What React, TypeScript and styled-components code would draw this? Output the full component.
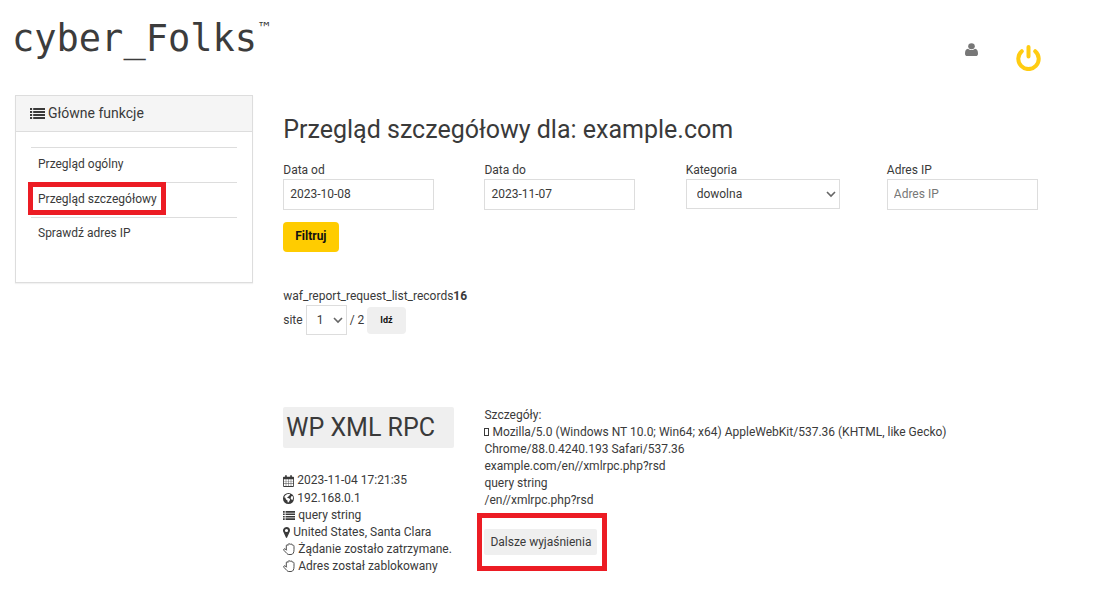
import React from "react";
import styled, { createGlobalStyle, css } from "styled-components";

const GlobalStyle = createGlobalStyle`
  *, *::before, *::after { box-sizing: border-box; }
  body {
    margin: 0;
    background: #fff;
    color: #3a3a3a;
    font: 12px/17px Roboto, "Liberation Sans", sans-serif;
  }
  button, input, select { font-family: inherit; color: inherit; }
`;

const redFrame = css`
  position: relative;
  &::after {
    content: "";
    position: absolute;
    border: 5px solid #ec1c24;
    pointer-events: none;
  }
`;

const Header = styled.header`
  display: flex;
  justify-content: space-between;
  align-items: flex-start;
  height: 95px;
  padding: 16px 67px 0 12px;
`;

const Logo = styled.a`
  display: flex;
  align-items: flex-start;
  color: #3c3c3c;
  text-decoration: none;
  font: 37px/46px "DejaVu Sans Mono", monospace;
`;

const Trademark = styled.span`
  font: 15px/24px "DejaVu Sans", sans-serif;
`;

const Tools = styled.nav`
  display: flex;
  align-items: flex-start;
  gap: 38px;
  padding-top: 27px;
`;

const ToolButton = styled.button<{ $tone: string }>`
  display: flex;
  padding: 0;
  border: 0;
  background: none;
  color: ${(p) => p.$tone};
`;

/* Four equal tracks: the panel takes one, the content the other three. */
const PageGrid = styled.div`
  display: grid;
  grid-template-columns: repeat(4, minmax(0, 1fr));
  column-gap: 30px;
  align-items: start;
  padding: 0 50px 0 15px;
`;

const Panel = styled.aside`
  border: 1px solid #ddd;
  box-shadow: 0 1px 1px rgba(0, 0, 0, 0.05);
`;

const PanelTitle = styled.h2`
  display: flex;
  align-items: center;
  gap: 3px;
  margin: 0;
  padding: 7px 14px 8px;
  border-bottom: 1px solid #ddd;
  background: #f5f5f5;
  font-size: 14px;
  line-height: 20px;
  font-weight: 400;
`;

const Menu = styled.ul`
  margin: 0;
  padding: 15px 15px 32px;
  list-style: none;
`;

const MenuItem = styled.li`
  padding: 7px 7px 9px;
  border-top: 1px solid #ddd;
  line-height: 18px;

  &:last-child { padding: 6px 7px 8px; }
`;

const MenuLink = styled.a<{ $marked?: boolean }>`
  display: inline-block;
  color: inherit;
  text-decoration: none;
  white-space: nowrap;
  ${(p) => p.$marked && redFrame}
  &::after { inset: -8px -9px -7px -10px; }
`;

const Main = styled.main`
  grid-column: span 3;
  padding-top: 21px;
`;

const Title = styled.h1`
  margin: 0 0 17px;
  font-size: 25px;
  line-height: 28px;
  font-weight: 400;
`;

const Filters = styled.form`
  display: grid;
  grid-template-columns: repeat(4, minmax(0, 1fr));
  column-gap: 30px;
  align-items: start;
`;

const Field = styled.div`
  display: flex;
  flex-direction: column;
  line-height: 18px;
`;

const TextBox = styled.input`
  width: 100%;
  max-width: 151px;
  height: 31px;
  padding: 0 6px 2px;
  border: 1px solid #ddd;
  background: #fff;
  font-size: 12px;
  &::placeholder { color: #777; opacity: 1; }
`;

const SelectWrap = styled.span<{ $width: number }>`
  display: grid;
  align-items: center;
  width: 100%;
  max-width: ${(p) => p.$width}px;
  > * { grid-area: 1 / 1; }
  > svg { justify-self: end; margin-right: 4px; pointer-events: none; }
`;

const Select = styled.select`
  appearance: none;
  width: 100%;
  height: 30px;
  padding: 0 10px;
  border: 1px solid #ddd;
  border-radius: 0;
  background: #fff;
  font-size: 12px;
`;

const FilterButton = styled.button`
  justify-self: start;
  height: 30px;
  margin-top: 12px;
  padding: 0 12px 2px;
  border: 0;
  border-radius: 4px;
  background: #fc0;
  color: #111;
  font-size: 12px;
  font-weight: 700;
`;

const Records = styled.p`
  margin: 36px 0 0;
`;

const Pager = styled.form`
  display: flex;
  align-items: center;
  gap: 3px;
`;

const GoButton = styled.button`
  height: 27px;
  padding: 0 13px;
  border: 0;
  border-radius: 4px;
  background: #efefef;
  color: #111;
  font-size: 9px;
  font-weight: 700;
`;

const Entry = styled.article`
  display: grid;
  grid-template-columns: repeat(4, minmax(0, 1fr));
  column-gap: 30px;
  align-items: start;
  margin-top: 72px;
`;

const EntryName = styled.h2`
  margin: 0 0 24px;
  padding: 0 3px;
  border-radius: 2px;
  background: #efefef;
  font-size: 25px;
  line-height: 41px;
  font-weight: 400;
  white-space: nowrap;
`;

const Facts = styled.ul`
  display: grid;
  margin: 0;
  padding: 0;
  list-style: none;
`;

const Fact = styled.li`
  display: flex;
  align-items: center;
  gap: 3px;
  white-space: nowrap;

  &:first-child { padding-bottom: 1px; }
`;

const Details = styled.div`
  grid-column: span 3;
`;

const UserAgent = styled.div`
  max-width: 480px;
`;

const Missing = styled.span`
  display: inline-block;
  width: 5px;
  height: 8px;
  margin-right: 3px;
  border: 1px solid #3a3a3a;
`;

const MoreLink = styled.a`
  ${redFrame}
  display: inline-block;
  margin-top: 20px;
  padding: 5px 6px 4px;
  border-radius: 2px;
  background: #efefef;
  color: inherit;
  text-decoration: none;
  &::after { inset: -16px -10px -16px -7px; }
`;

const ListIcon = ({ width, height }: { width: number; height: number }) => (
  <svg width={width} height={height} viewBox="0 0 14 11" preserveAspectRatio="none" fill="currentColor" aria-hidden="true">
    <path d="M0 0h2v2H0zM3 0h11v2H3zM0 3h2v2H0zM3 3h11v2H3zM0 6h2v2H0zM3 6h11v2H3zM0 9h2v2H0zM3 9h11v2H3z" />
  </svg>
);

const CalendarIcon = () => (
  <svg width="11" height="12" viewBox="0 0 13 14" aria-hidden="true">
    <path
      fill="currentColor"
      fillRule="evenodd"
      d="M1 2h1.5V1c0-.6.4-1 1-1s1 .4 1 1v1h4V1c0-.6.4-1 1-1s1 .4 1 1v1H12c.6 0 1 .4 1 1v10c0 .6-.4 1-1 1H1c-.6 0-1-.4-1-1V3c0-.6.4-1 1-1zm0 3v2.2h2.3V5zm2.8 0v2.2h2.5V5zm3 0v2.2h2.4V5zm2.9 0v2.2H12V5zM1 7.7v2.3h2.3V7.7zm2.8 0v2.3h2.5V7.7zm3 0v2.3h2.4V7.7zm2.9 0v2.3H12V7.7zM1 10.5V13h2.3v-2.5zm2.8 0V13h2.5v-2.5zm3 0V13h2.4v-2.5zm2.9 0V13H12v-2.5z"
    />
  </svg>
);

const GlobeIcon = () => (
  <svg width="11" height="11" viewBox="0 0 12 12" aria-hidden="true">
    <circle cx="6" cy="6" r="6" fill="currentColor" />
    <path fill="#fff" d="M5.2 1l2.2.2.4 1.3-1.2.3-.8 1.200-1.300.6.6.9 1.400.3 1.300 1-.7 1.800-1.300 1.800-.7-.2-.2-2L3.300 7 2.500 5.300 1.300 4.500C1.800 2.900 3.200 1.500 5.200 1zM9 3.500l1.400-.2.7 2.200-.8 2.200-1.100-.5-.9-1.500z" />
  </svg>
);

const PinIcon = () => (
  <svg width="7" height="11" viewBox="0 0 7 11" aria-hidden="true">
    <path
      fill="currentColor"
      fillRule="evenodd"
      d="M3.5 0A3.5 3.5 0 0 1 7 3.5c0 .6-.1 1.1-.4 1.6L4.1 10.5c-.2.6-1 .6-1.200 0L.4 5.100A3.500 3.500 0 0 1 3.500 0zm0 1.900a1.600 1.600 0 1 0 0 3.200 1.600 1.600 0 0 0 0-3.200z"
    />
  </svg>
);

const HandIcon = () => (
  <svg width="12" height="13" viewBox="0 0 12 13" fill="none" stroke="currentColor" strokeWidth=".9" strokeLinecap="round" strokeLinejoin="round" aria-hidden="true">
    <path d="M3.300 6.600V2.700c0-1.100 1.400-1.200 1.600-.3 0-2 1.800-2.300 2.200-.9.500-1.100 1.900-.7 1.900.6.900-.4 2 .1 2 1.300v3.200c0 2.800-.9 4.900-2.900 4.900H5.700c-.7 0-1.200-.3-1.700-.9L.9 7.300c-.8-1.200.6-2 1.500-1.200l.9 1" />
  </svg>
);

const UserIcon = () => (
  <svg width="13" height="13" viewBox="0 0 13 14" fill="currentColor" preserveAspectRatio="none" aria-hidden="true">
    <circle cx="6.5" cy="3.5" r="3.3" />
    <path d="M3 6.200C.8 6.500 0 8.700 0 11.500 0 13 .9 14 2.300 14h8.400c1.400 0 2.300-1 2.300-2.500 0-2.800-.8-5-3-5.300-1 .9-2.100 1.300-3.500 1.300S4 7.100 3 6.200z" />
  </svg>
);

const PowerIcon = () => (
  <svg width="25" height="28" viewBox="0 0 25 28" fill="none" stroke="currentColor" strokeWidth="4" strokeLinecap="round" aria-hidden="true">
    <path d="M5.800 8.200a10.200 10.200 0 1 0 13.400 0M12.500 4v9.500" />
  </svg>
);

const Chevron = () => (
  <svg width="10" height="8" viewBox="0 0 10 8" fill="none" stroke="#666" strokeWidth="1.6" aria-hidden="true">
    <path d="M1 2l4 4 4-4" />
  </svg>
);

const facts = [
  { icon: <CalendarIcon />, text: "2023-11-04 17:21:35" },
  { icon: <GlobeIcon />, text: "192.168.0.1" },
  { icon: <ListIcon width={12} height={9} />, text: "query string" },
  { icon: <PinIcon />, text: "United States, Santa Clara" },
  { icon: <HandIcon />, text: "Żądanie zostało zatrzymane." },
  { icon: <HandIcon />, text: "Adres został zablokowany" },
];

export default function App() {
  return (
    <>
      <GlobalStyle />
      <Header>
        <Logo href="#">
          cyber_Folks<Trademark>™</Trademark>
        </Logo>
        <Tools>
          <ToolButton $tone="#777" aria-label="Konto"><UserIcon /></ToolButton>
          <ToolButton $tone="#fc1" aria-label="Wyloguj"><PowerIcon /></ToolButton>
        </Tools>
      </Header>
      <PageGrid>
        <Panel>
          <PanelTitle><ListIcon width={15} height={11} />Główne funkcje</PanelTitle>
          <Menu>
            <MenuItem><MenuLink href="#">Przegląd ogólny</MenuLink></MenuItem>
            <MenuItem><MenuLink href="#" $marked>Przegląd szczegółowy</MenuLink></MenuItem>
            <MenuItem><MenuLink href="#">Sprawdź adres IP</MenuLink></MenuItem>
          </Menu>
        </Panel>
        <Main>
          <Title>Przegląd szczegółowy dla: example.com</Title>
          <Filters>
            <Field>
              <label htmlFor="from">Data od</label>
              <TextBox id="from" defaultValue="2023-10-08" />
            </Field>
            <Field>
              <label htmlFor="to">Data do</label>
              <TextBox id="to" defaultValue="2023-11-07" />
            </Field>
            <Field>
              <label htmlFor="category">Kategoria</label>
              <SelectWrap $width={154}>
                <Select id="category"><option>dowolna</option></Select>
                <Chevron />
              </SelectWrap>
            </Field>
            <Field>
              <label htmlFor="ip">Adres IP</label>
              <TextBox id="ip" placeholder="Adres IP" />
            </Field>
            <FilterButton type="button">Filtruj</FilterButton>
          </Filters>
          <Records>waf_report_request_list_records<b>16</b></Records>
          <Pager>
            <label htmlFor="page">site</label>
            <SelectWrap $width={41}>
              <Select id="page"><option>1</option><option>2</option></Select>
              <Chevron />
            </SelectWrap>
            <span>/ 2</span>
            <GoButton type="button">Idź</GoButton>
          </Pager>
          <Entry>
            <div>
              <EntryName>WP XML RPC</EntryName>
              <Facts>
                {facts.map((fact) => (
                  <Fact key={fact.text}>{fact.icon}{fact.text}</Fact>
                ))}
              </Facts>
            </div>
            <Details>
              <div>Szczegóły:</div>
              <UserAgent>
                <Missing />Mozilla/5.0 (Windows NT 10.0; Win64; x64) AppleWebKit/537.36 (KHTML, like Gecko) Chrome/88.0.4240.193 Safari/537.36
              </UserAgent>
              <div>example.com/en//xmlrpc.php?rsd</div>
              <div>query string</div>
              <div>/en//xmlrpc.php?rsd</div>
              <MoreLink href="#">Dalsze wyjaśnienia</MoreLink>
            </Details>
          </Entry>
        </Main>
      </PageGrid>
    </>
  );
}
